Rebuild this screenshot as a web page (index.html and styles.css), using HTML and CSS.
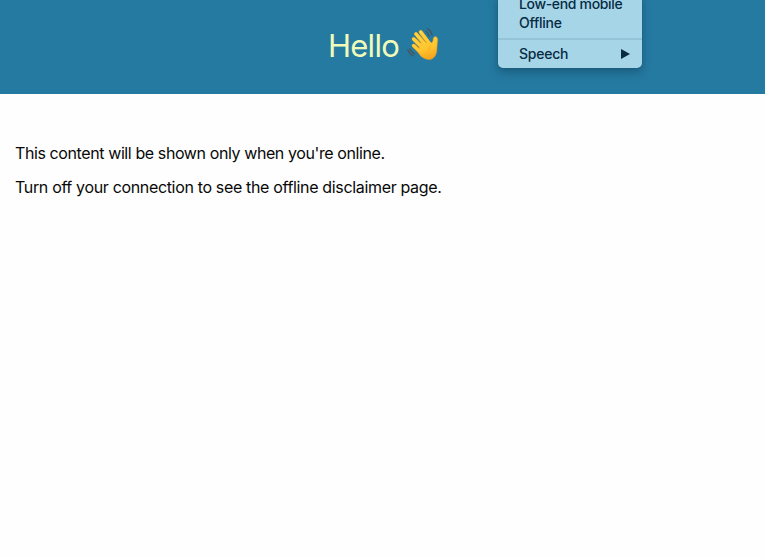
FILE: index.html
```html
<!DOCTYPE html>
<html lang="en">
<head>
<meta charset="utf-8">
<title>Hello</title>
<link rel="stylesheet" href="styles.css">
</head>
<body>
<header class="banner">
  <h1 class="title"><span class="greeting">Hello</span>
    <svg class="wave" viewBox="0 0 135 135" role="img" aria-label="Waving hand">
      <defs>
        <linearGradient id="skin" gradientUnits="userSpaceOnUse" x1="60" y1="30" x2="90" y2="116">
          <stop offset="0" stop-color="#ffd545"/><stop offset=".6" stop-color="#ffc52e"/><stop offset="1" stop-color="#f1a01c"/>
        </linearGradient>
      </defs>
      <g fill="none" stroke="#d9951b" stroke-width="11.5" stroke-linecap="round">
        <path d="M38 74L60 96M38 54L66 82M45 39L75 73M59 33L85 68"/>
      </g>
      <path fill="url(#skin)" stroke="#e49d1e" stroke-width="1.5" d="M58 65L88 66Q94 67 96 59L97 52Q99 46 105 47Q111 49 110 57Q109 66 108 77C108 94 105 106 94 113C83 119 70 114 59 105L51 93Z"/>
      <g fill="none" stroke="url(#skin)" stroke-width="10" stroke-linecap="round">
        <path d="M38 74L63 98M38 54L69 84M45 39L78 77M59 33L87 70"/>
      </g>
      <path fill="none" stroke="#e9a522" stroke-width="1.8" d="M43 69L57 83M45 52L63 70M55 42L73 63M91 72Q82 78 84 88"/>
      <g fill="none" stroke="#4c5052" stroke-width="3.4" stroke-linecap="round">
        <path d="M75 30Q82 36 84 46M80 23Q91 30 93 42M26 83Q30 93 41 99M20 87Q25 99 37 105"/>
      </g>
    </svg>
  </h1>
</header>
<main class="content">
  <p class="first">This content will be shown only when you're online.</p>
  <p>Turn off your connection to see the offline disclaimer page.</p>
</main>
<div class="menu">
  <div class="item mobile">Low-end mobile</div>
  <div class="item">Offline</div>
  <div class="divider"></div>
  <div class="item submenu"><span>Speech</span><svg class="arrow" viewBox="0 0 9 10"><path d="M0 0L9 5L0 10Z"/></svg></div>
</div>
</body>
</html>
```
FILE: styles.css
```css
body {
  margin: 0;
  height: 558px;
  overflow: hidden;
  background: #fefefe;
  color: #080808;
  font-family: Inter, "Liberation Sans", sans-serif;
}
.banner {
  height: 94px;
  display: flex;
  justify-content: center;
  background: #257aa2;
}
.title {
  margin: 0;
  display: flex;
  align-items: center;
  height: 90px;
  padding-left: 9px;
  color: #f1fbb9;
  font-size: 31px;
  font-weight: 370;
}
.greeting {
  letter-spacing: -0.7px;
}
.wave {
  width: 45px;
  height: 45px;
  margin: -4px 0 0 2px;
}
.content {
  padding: 49px 15px;
}
.content p {
  margin: 0 0 14px;
  font-size: 16px;
  line-height: 20px;
  white-space: nowrap;
  letter-spacing: -0.34px;
}
.content .first {
  letter-spacing: -0.4px;
}
.menu {
  position: absolute;
  top: -6px;
  left: 498px;
  width: 144px;
  height: 74px;
  box-sizing: border-box;
  border-radius: 0 0 5px 5px;
  background: #a7d5e8;
  color: #062b42;
  box-shadow: 0 0 1px #17536f, 0 4px 10px rgba(0, 30, 45, .35);
  font-size: 14px;
  font-weight: 450;
  line-height: 19px;
  letter-spacing: -0.25px;
}
.item {
  padding-left: 21px;
  height: 19px;
  white-space: nowrap;
}
.mobile {
  letter-spacing: -0.34px;
}
.divider {
  height: 2px;
  margin: 6px 0 4px;
  background: #94c4d7;
}
.submenu {
  display: flex;
  align-items: center;
  justify-content: space-between;
  padding-right: 12px;
}
.arrow {
  width: 9px;
  height: 10px;
  fill: #062b42;
}
```
